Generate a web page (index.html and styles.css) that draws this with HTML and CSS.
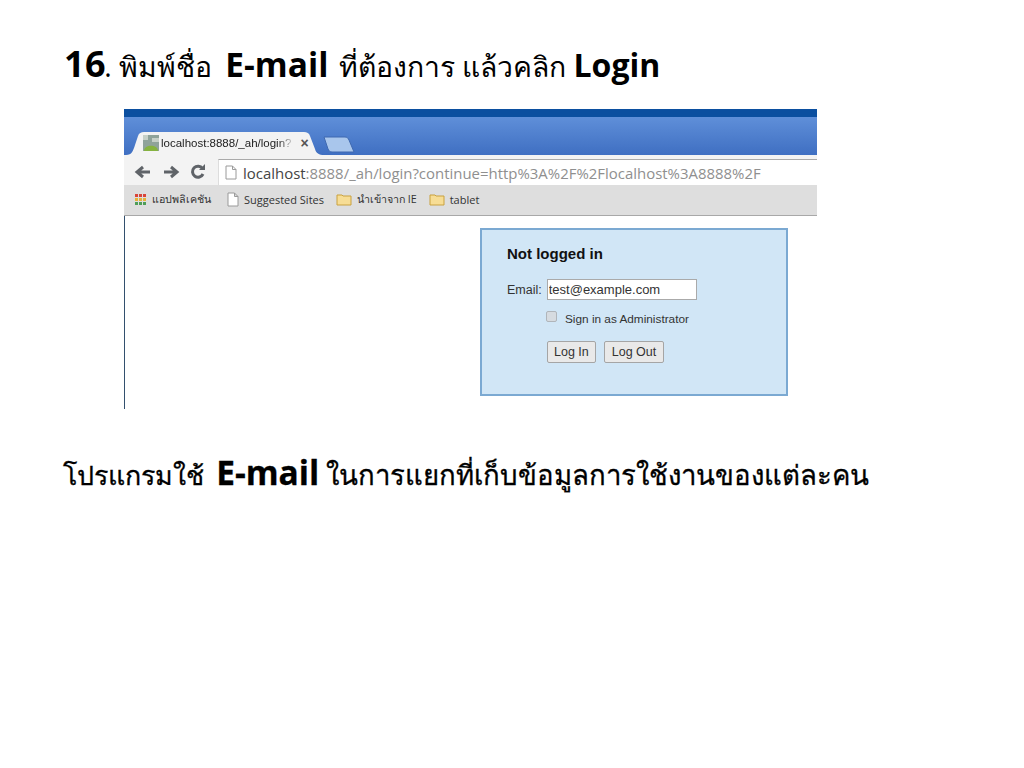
FILE: index.html
```html
<!DOCTYPE html>
<html lang="th">
<head>
    <meta charset="UTF-8">
    <meta name="viewport" content="width=device-width, initial-scale=1.0">
    <title>Login</title>
    <link rel="stylesheet" href="styles.css">
</head>
<body>
    <div class="slide">
        <h1 class="step"><b class="num">16</b>. พิมพ์ชื่อ <b class="big">E-mail</b> ที่ต้องการ แล้วคลิก <b class="login-word">Login</b></h1>

        <div class="shot">
            <div class="title-band"></div>
            <div class="tab-strip">
                <div class="tab">
                    <svg class="tab-bg" width="198" height="24" viewBox="0 0 198 24"><path d="M0 24 C6 24 7 20 9 14 L12 5 C13 2 15 1 18 1 H178 C181 1 183 2 184 5 L189 18 C190 22 193 24 198 24 Z" fill="#f3f3f3"/></svg>
                    <svg class="favicon" width="18" height="18" viewBox="0 0 18 18"><rect x="1" y="1" width="16" height="16" fill="#8fa39a"/><rect x="1" y="1" width="5" height="5" fill="#c6d0c8"/><rect x="10" y="4" width="7" height="4" fill="#c6d0c8"/><path d="M2 17 C2 10 16 10 16 17 Z" fill="#86b340"/></svg>
                    <span class="tab-title">localhost:8888/_ah/login?</span>
                    <span class="tab-close">×</span>
                </div>
                <svg class="new-tab" width="32" height="18" viewBox="0 0 32 18"><path d="M1 1 H22 C24 1 25 2 26 4 L31 16 H9 C7 16 6 15 5 13 Z" fill="#a9c6ec" stroke="#3f69b0"/></svg>
            </div>
            <div class="toolbar">
                <svg class="nav" width="18" height="14" viewBox="0 0 18 14"><path d="M16 7 H4 M9 2 L3 7 L9 12" fill="none" stroke="#5f6368" stroke-width="3"/></svg>
                <svg class="nav" width="18" height="14" viewBox="0 0 18 14"><path d="M2 7 H14 M9 2 L15 7 L9 12" fill="none" stroke="#5f6368" stroke-width="3"/></svg>
                <svg class="nav" width="16" height="16" viewBox="0 0 16 16"><path d="M13 10 A5.5 5.5 0 1 1 12.5 4.5" fill="none" stroke="#5f6368" stroke-width="3"/><path d="M9 6 H15 V0 Z" fill="#5f6368"/></svg>
                <div class="omnibox">
                    <svg width="12" height="15" viewBox="0 0 12 15"><path d="M1 1 H7.5 L11 4.5 V14 H1 Z M7.5 1 V4.5 H11" fill="#fff" stroke="#9a9a9a"/></svg>
                    <span class="url"><span class="host">localhost</span>:8888/_ah/login?continue=http%3A%2F%2Flocalhost%3A8888%2F</span>
                </div>
            </div>
            <div class="bookmarks">
                <span class="mark mark-apps">
                    <svg width="13" height="13" viewBox="0 0 13 13"><path d="M1 2.5 H12" stroke="#d9453a" stroke-width="3" stroke-dasharray="3 1"/><path d="M1 6.5 H12" stroke="#e8b23a" stroke-width="3" stroke-dasharray="3 1"/><path d="M1 10.5 H12" stroke="#4f9e58" stroke-width="3" stroke-dasharray="3 1"/></svg>
                    <span class="mark-thai">แอปพลิเคชัน</span>
                </span>
                <span class="mark">
                    <svg width="12" height="15" viewBox="0 0 12 15"><path d="M1 1 H7.5 L11 4.5 V14 H1 Z M7.5 1 V4.5 H11" fill="#fff" stroke="#9a9a9a"/></svg>
                    Suggested Sites
                </span>
                <span class="mark">
                    <svg width="16" height="13" viewBox="0 0 16 13"><path d="M1 2 H6 L7 3 H15 V12 H1 Z" fill="#f7dd95" stroke="#c9a13f"/></svg>
                    <span class="mark-thai">นำเข้าจาก IE</span>
                </span>
                <span class="mark">
                    <svg width="16" height="13" viewBox="0 0 16 13"><path d="M1 2 H6 L7 3 H15 V12 H1 Z" fill="#f7dd95" stroke="#c9a13f"/></svg>
                    tablet
                </span>
            </div>
            <div class="page">
                <form class="login-box">
                    <h3>Not logged in</h3>
                    <div class="email-row">
                        <label for="email">Email:</label>
                        <input type="text" id="email" value="test@example.com">
                    </div>
                    <div class="admin-row">
                        <span class="checkbox"></span>
                        <span>Sign in as Administrator</span>
                    </div>
                    <div class="button-row">
                        <button type="button">Log In</button>
                        <button type="button">Log Out</button>
                    </div>
                </form>
            </div>
        </div>

        <h2 class="note"><span class="note-lead">โปรแกรมใช้</span> <b class="big">E-mail</b> ในการแยกที่เก็บข้อมูลการใช้งานของแต่ละคน</h2>
    </div>
</body>
</html>
```

FILE: styles.css
```css
* {
    box-sizing: border-box;
    margin: 0;
    padding: 0;
}

body {
    background-color: white;
    color: #000;
    font-family: 'Open Sans', 'Noto Sans', 'Liberation Sans', sans-serif;
    overflow: hidden;
}

.slide {
    width: 1024px;
    height: 768px;
    padding-top: 42px;
}

.step {
    height: 67px;
    padding-left: 64px;
    font-size: 28.3px;
    line-height: 44px;
    font-weight: 400;
    white-space: nowrap;
}

.num {
    margin-right: -2px;
    font-size: 36px;
    letter-spacing: 0.5px;
}

.big {
    font-size: 33.5px;
    font-weight: 700;
}

.step .big {
    margin: 0 3px 0 6px;
}

.login-word {
    font-size: 32px;
}

.note {
    margin-top: 41px;
    padding-left: 63px;
    font-size: 27.6px;
    line-height: 44px;
    font-weight: 400;
    white-space: nowrap;
    -webkit-text-stroke: 0.3px #000;
}

.note-lead {
    margin-right: 5px;
    font-size: 26.8px;
}

/* browser screenshot */
.shot {
    width: 693px;
    height: 300px;
    margin-left: 124px;
    font-family: 'Liberation Sans', sans-serif;
    overflow: hidden;
}

.title-band {
    height: 8px;
    background-color: #0b4fa0;
}

.tab-strip {
    display: flex;
    align-items: flex-end;
    height: 38px;
    padding-left: 2px;
    background: linear-gradient(#5f8fd9, #3f6fc2);
}

.tab {
    position: relative;
    display: flex;
    align-items: center;
    width: 198px;
    height: 24px;
    padding-left: 16px;
    font-size: 11.5px;
    color: #222;
}

.tab-bg {
    position: absolute;
    left: 0;
    top: 0;
}

.favicon,
.tab-title,
.tab-close {
    position: relative;
}

.tab-title {
    margin-left: 1px;
    white-space: nowrap;
    -webkit-mask-image: linear-gradient(to right, #000 90%, rgba(0, 0, 0, 0.25));
    mask-image: linear-gradient(to right, #000 90%, rgba(0, 0, 0, 0.25));
}

.tab-close {
    margin-left: 9px;
    font-size: 14px;
    font-weight: 700;
    color: #555;
}

.new-tab {
    margin-left: -1px;
    margin-bottom: 1px;
}

.toolbar {
    display: flex;
    align-items: center;
    gap: 10px;
    height: 30px;
    padding-left: 10px;
    padding-top: 4px;
    background-color: #f3f3f3;
}

.nav {
    flex: none;
}

.omnibox {
    display: flex;
    align-items: center;
    gap: 6px;
    flex: 1;
    height: 26px;
    margin-left: 2px;
    padding-left: 6px;
    background-color: white;
    border-top: 1px solid #aaa;
    border-left: 1px solid #ddd;
    font-family: 'Open Sans', sans-serif;
    font-size: 14.95px;
    color: #8f8f8f;
    white-space: nowrap;
}

.host {
    color: #444;
}

.bookmarks {
    display: flex;
    align-items: center;
    gap: 12px;
    height: 31px;
    padding-left: 10px;
    padding-bottom: 2px;
    background-color: #dedede;
    border-bottom: 1px solid #a8a8a8;
    font-family: 'Open Sans', sans-serif;
    font-size: 11px;
    color: #333;
}

.mark {
    display: flex;
    align-items: center;
    gap: 5px;
}

.mark-apps {
    margin-right: 4px;
}

.mark-thai {
    font-size: 10.7px;
}

.page {
    height: 193px;
    padding-top: 12px;
    padding-left: 355px;
    background-color: white;
    border-left: 1px solid #33506e;
}

.login-box {
    width: 308px;
    height: 168px;
    padding: 14px 0 0 25px;
    background-color: #d1e6f6;
    border: 2px solid #7ba9d2;
    font-size: 12px;
    color: #333;
}

.login-box h3 {
    font-size: 15px;
    line-height: 19px;
    color: #111;
}

.email-row {
    display: flex;
    align-items: center;
    gap: 5px;
    margin-top: 16px;
}

.email-row label {
    font-size: 12.5px;
}

.email-row input {
    width: 150px;
    height: 21px;
    padding-left: 1px;
    border: 1px solid #aaa;
    font-family: inherit;
    font-size: 13px;
    color: #333;
    background-color: white;
}

.admin-row {
    display: flex;
    align-items: center;
    gap: 8px;
    margin-top: 12px;
    padding-left: 39px;
    font-size: 11.8px;
}

.checkbox {
    width: 11px;
    height: 11px;
    margin-top: -5px;
    background-color: #d6dbe0;
    border: 1px solid #b0b5ba;
    border-radius: 2px;
}

.button-row {
    display: flex;
    gap: 8px;
    margin-top: 15px;
    padding-left: 40px;
}

.button-row button {
    height: 22px;
    padding: 0 6px;
    background-color: #e9e9e9;
    border: 1px solid #a5a5a5;
    border-radius: 2px;
    font-family: inherit;
    font-size: 12.5px;
    color: #333;
}

.button-row button + button {
    padding: 0 7px;
}
```
